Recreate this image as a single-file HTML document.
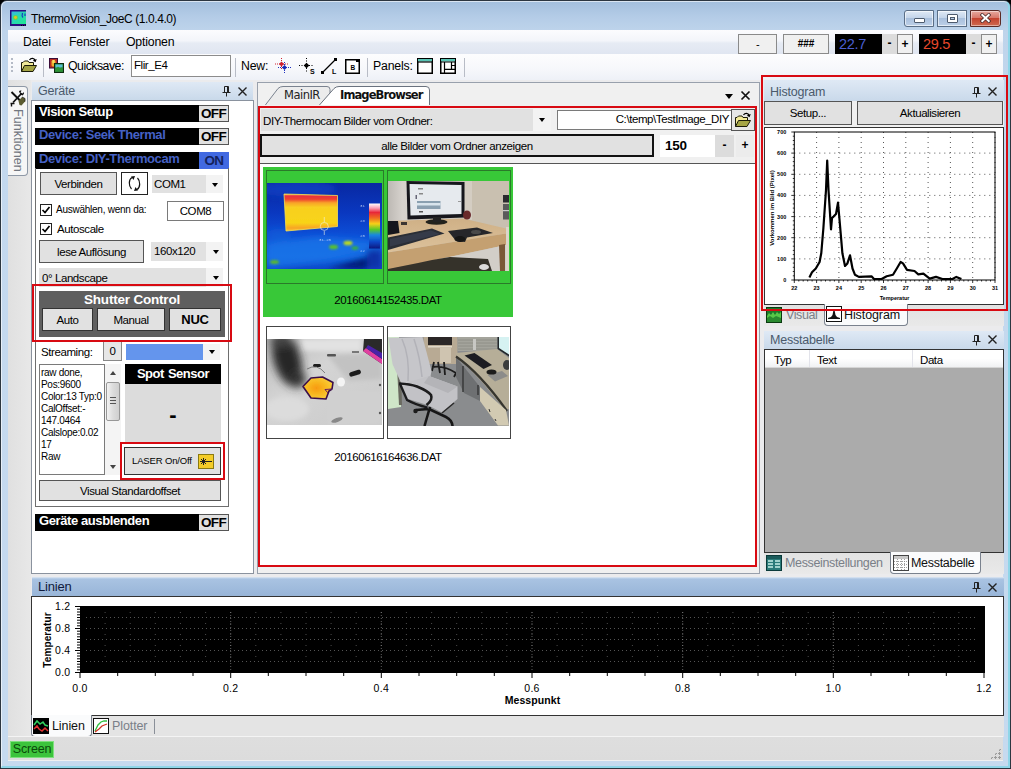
<!DOCTYPE html>
<html><head><meta charset="utf-8"><title>ThermoVision_JoeC</title>
<style>
*{box-sizing:border-box;margin:0;padding:0}
html,body{width:1011px;height:769px;overflow:hidden;background:#000;font-family:"Liberation Sans",sans-serif;font-size:12px;color:#000}
.a{position:absolute}
.seg{font-family:"Liberation Sans","DejaVu Sans",sans-serif}
#win{left:0;top:0;width:1011px;height:769px;background:linear-gradient(180deg,#a3bfdd 0,#b4cce7 16px,#bed4eb 30px,#c3d8ee 120px,#c6daef 100%);border-radius:7px 7px 0 0;border:1px solid #2c3640}
#client{left:8px;top:30px;width:995px;height:731px;background:#f0f0f0}
.btn{position:absolute;background:#e1e1e1;border:1px solid #707070;text-align:center;font-size:11.5px;letter-spacing:-0.42px;white-space:nowrap;overflow:hidden}
.blk{position:absolute;background:#000;color:#fff;font-weight:bold;font-size:13px;letter-spacing:-0.4px;white-space:nowrap;overflow:hidden}
.ptitle{position:absolute;height:18px;padding-top:1px;background:linear-gradient(180deg,#dfe9f5,#c9d9ea);color:#4a5a6c;font-size:12.5px;letter-spacing:-0.2px;padding-left:6px;line-height:17px;white-space:nowrap}
.combo{position:absolute;background:#e1e1e1;font-size:11.5px;letter-spacing:-0.42px;white-space:nowrap;overflow:hidden}
.arr{position:absolute;width:0;height:0;border-left:3px solid transparent;border-right:3px solid transparent;border-top:4px solid #000}
.red{position:absolute;border:2px solid #d80a12;pointer-events:none}
.tx{position:absolute;white-space:nowrap}
</style></head><body>
<div id="win" class="a"></div>
<div class="a" style="left:1px;top:1px;width:1009px;height:767px;border:1px solid rgba(255,255,255,.6);border-right:2px solid #8fd6e8;border-bottom:2px solid #8fd6e8;border-radius:6px 6px 0 0"></div>
<!-- TITLE -->
<svg class="a" style="left:10px;top:10px" width="16" height="16" viewBox="0 0 16 16"><defs><linearGradient id="ic" x1="0" y1="0" x2="1" y2="1"><stop offset="0" stop-color="#38b8e0"/><stop offset="0.5" stop-color="#28d8b0"/><stop offset="1" stop-color="#20e890"/></linearGradient></defs><rect width="16" height="16" fill="#2a0c80"/><rect x="1.500" y="1.500" width="14.500" height="12.500" fill="url(#ic)"/><circle cx="5.500" cy="7.500" r="2.600" fill="#58d858"/><circle cx="5.500" cy="7.500" r="1.400" fill="#f0b820"/><path d="M12.500 3 Q11.500 6 13 7.500 M15 3.500 V6" stroke="#1838c0" stroke-width="1.200" fill="none"/><path d="M11 15.500 H12 M13 15.500 H14 M15 15 H16" stroke="#000" stroke-width="1"/></svg>
<div class="tx seg" style="left:31px;top:11px;font-size:12px;letter-spacing:-0.42px;line-height:16px;">ThermoVision_JoeC (1.0.4.0)</div>
<!-- caption buttons -->
<div class="a" style="left:904px;top:10px;width:30px;height:17px;border:1px solid #5a6e86;border-radius:3px 0 0 3px;background:linear-gradient(180deg,#dfe9f5 0,#c4d5ea 45%,#a9c0dd 50%,#bdd0e8 100%);box-shadow:inset 0 0 0 1px rgba(255,255,255,.6)"></div>
<div class="a" style="left:914px;top:18px;width:11px;height:5px;background:#fff;border:1px solid #4d5b6e;border-radius:1px"></div>
<div class="a" style="left:937px;top:10px;width:30px;height:17px;border:1px solid #5a6e86;background:linear-gradient(180deg,#dfe9f5 0,#c4d5ea 45%,#a9c0dd 50%,#bdd0e8 100%);box-shadow:inset 0 0 0 1px rgba(255,255,255,.6)"></div>
<div class="a" style="left:947px;top:14px;width:11px;height:9px;background:#fff;border:1px solid #4d5b6e;border-radius:1px"></div>
<div class="a" style="left:950px;top:17px;width:5px;height:3px;background:#b9cde6;border:1px solid #4d5b6e"></div>
<div class="a" style="left:970px;top:10px;width:31px;height:17px;border:1px solid #5b2a25;border-radius:0 3px 3px 0;background:linear-gradient(180deg,#e7a99f 0,#d8786a 45%,#c4432f 50%,#cf6a50 100%);box-shadow:inset 0 0 0 1px rgba(255,255,255,.45)"></div>
<svg class="a" style="left:980px;top:13px" width="11" height="10" viewBox="0 0 11 10"><path d="M2.300 2 L8.700 8 M8.700 2 L2.300 8" stroke="#4a2a2a" stroke-width="3.600" stroke-linecap="square"/><path d="M2.300 2 L8.700 8 M8.700 2 L2.300 8" stroke="#fff" stroke-width="2" stroke-linecap="square"/></svg>
<div id="client" class="a"></div>
<!-- MENU -->
<div class="a" id="menubar" style="left:8px;top:30px;width:995px;height:24px;background:linear-gradient(180deg,#fcfcfe 0,#f3f5fa 45%,#e6ebf4 55%,#e0e6f1 100%)"></div>
<div class="tx seg" style="left:23px;top:34px;font-size:12.3px;letter-spacing:-0.2px;line-height:16px;">Datei</div>
<div class="tx seg" style="left:69px;top:34px;font-size:12.3px;letter-spacing:-0.2px;line-height:16px;">Fenster</div>
<div class="tx seg" style="left:126px;top:34px;font-size:12.3px;letter-spacing:-0.2px;line-height:16px;">Optionen</div>
<!-- top right controls -->
<div class="btn" style="left:738px;top:34px;width:39px;height:20px;line-height:18px;background:#f0f0f0;border-color:#8a8a8a;font-size:11px">-</div>
<div class="btn" style="left:783px;top:34px;width:46px;height:20px;line-height:18px;background:#f0f0f0;border-color:#8a8a8a;font-size:10px;font-weight:bold;letter-spacing:0">###</div>
<div class="a" style="left:835px;top:34px;width:47px;height:20px;background:#000;color:#4a5fd0;font-size:14.5px;line-height:21px;padding-left:4px;letter-spacing:-0.3px">22.7</div>
<div class="a" style="left:882px;top:34px;width:15px;height:20px;background:#dcdcdc;font-weight:bold;text-align:center;line-height:19px;font-size:12px">-</div>
<div class="a" style="left:897px;top:34px;width:16px;height:20px;background:#f0f0f0;border:1px solid #8a8a8a;font-weight:bold;text-align:center;line-height:19px;font-size:12px">+</div>
<div class="a" style="left:919px;top:34px;width:47px;height:20px;background:#000;color:#e8482c;font-size:14.5px;line-height:21px;padding-left:4px;letter-spacing:-0.3px">29.5</div>
<div class="a" style="left:966px;top:34px;width:15px;height:20px;background:#dcdcdc;font-weight:bold;text-align:center;line-height:19px;font-size:12px">-</div>
<div class="a" style="left:981px;top:34px;width:16px;height:20px;background:#f0f0f0;border:1px solid #8a8a8a;font-weight:bold;text-align:center;line-height:19px;font-size:12px">+</div>
<!-- TOOLBAR -->
<div class="a" id="toolbar" style="left:8px;top:54px;width:995px;height:26px;background:linear-gradient(180deg,#fdfdfe 0,#f6f7fb 60%,#eef1f7 100%)"></div>
<div class="a" style="left:11px;top:58px;width:2px;height:15px;background:repeating-linear-gradient(180deg,#b4bac6 0,#b4bac6 2px,transparent 2px,transparent 4px)"></div>
<svg class="a" style="left:20px;top:57px" width="18" height="17" viewBox="0 0 18 17"><path d="M1.500 14.500 V5.500 H3 L4.500 4 H8 L9 5.500 H13.500 V8" fill="#f2ea98" stroke="#1a1a08" stroke-width="1"/><path d="M1.500 14.500 L4.500 8.500 H16.500 L13 14.500 Z" fill="#a4a444" stroke="#1a1a08" stroke-width="1"/><path d="M9.500 3 C11 0.800 14 0.800 15.300 3.500" fill="none" stroke="#000" stroke-width="1.300"/><path d="M16.800 2 L15.500 5.200 L12.800 3.600 Z" fill="#000"/></svg>
<div class="a" style="left:43px;top:58px;width:1px;height:19px;background:#b8bcc6"></div>
<svg class="a" style="left:49px;top:58px" width="15" height="15" viewBox="0 0 15 15"><rect x="0.500" y="0.500" width="8" height="9.500" fill="#b82c20" stroke="#3a0c38"/><rect x="2.500" y="2" width="4" height="6.500" rx="1.500" fill="#f0b030"/><rect x="3.500" y="2" width="2" height="3" fill="#f8e060"/><rect x="5.500" y="5.500" width="9" height="9" fill="#2a8038" stroke="#0c2c10"/><rect x="6.500" y="6.500" width="7" height="3" fill="#58c0d8"/><path d="M6.500 11 L9 8.500 L11 10.500 L13.500 9 V13.500 H6.500Z" fill="#2c9434"/></svg>
<div class="tx seg" style="left:68px;top:58px;font-size:12.3px;letter-spacing:-0.5px;line-height:16px;">Quicksave:</div>
<div class="a" style="left:131px;top:55px;width:100px;height:22px;background:#fff;border:1px solid #8c8c8c;font-size:11.5px;letter-spacing:-0.42px;padding:2px 0 0 2px;line-height:14px" class="seg">Flir_E4</div>
<div class="a" style="left:235px;top:58px;width:1px;height:19px;background:#b8bcc6"></div>
<div class="tx seg" style="left:241px;top:58px;font-size:12.3px;letter-spacing:-0.2px;line-height:16px;">New:</div>
<svg class="a" style="left:274px;top:57px" width="18" height="18" viewBox="0 0 18 18"><path d="M7.500 1 V13 M1 7 H14" stroke="#d02030" stroke-width="1" stroke-dasharray="1 1"/><path d="M10.500 5 V17 M4 10.500 H17" stroke="#2030c0" stroke-width="1" stroke-dasharray="1 1"/><path d="M7.500 4.500 L10 7 L7.500 9.500 L5 7 Z" fill="#d02030"/><path d="M10.500 8 L13 10.500 L10.500 13 L8 10.500 Z" fill="#1828b8"/></svg>
<svg class="a" style="left:298px;top:57px" width="18" height="18" viewBox="0 0 18 18"><path d="M8.500 1 V16 M1 8.500 H15" stroke="#000" stroke-width="1" stroke-dasharray="1 1.500"/><rect x="6.500" y="6.500" width="4" height="4" fill="#000" transform="rotate(45 8.500 8.500)"/><text x="12" y="17" font-size="7" font-weight="bold" font-family="Liberation Sans,sans-serif">S</text></svg>
<svg class="a" style="left:320px;top:57px" width="18" height="18" viewBox="0 0 18 18"><path d="M2.500 15.500 L15.500 2.500" stroke="#000" stroke-width="1.200"/><rect x="1" y="14" width="3" height="3" fill="#000"/><rect x="14" y="1" width="3" height="3" fill="#000"/><text x="12" y="17" font-size="7" font-weight="bold" font-family="Liberation Sans,sans-serif">L</text></svg>
<svg class="a" style="left:345px;top:59px" width="15" height="15" viewBox="0 0 15 15"><rect x="0.750" y="0.750" width="13.500" height="13.500" fill="#fff" stroke="#000" stroke-width="1.500"/><rect x="11" y="0" width="4" height="3" fill="#000"/><text x="5.500" y="11" font-size="6.500" font-weight="bold" font-family="Liberation Sans,sans-serif">B</text></svg>
<div class="a" style="left:367px;top:58px;width:1px;height:19px;background:#b8bcc6"></div>
<div class="tx seg" style="left:373px;top:58px;font-size:12.3px;letter-spacing:-0.2px;line-height:16px;">Panels:</div>
<svg class="a" style="left:417px;top:58px" width="16" height="16" viewBox="0 0 16 16"><rect x="0.750" y="0.750" width="14.500" height="14.500" fill="#fff" stroke="#000" stroke-width="1.500"/><rect x="1" y="1" width="14" height="2.500" fill="#58c4b4"/><path d="M0 4 H16" stroke="#000" stroke-width="1.200"/></svg>
<svg class="a" style="left:440px;top:58px" width="16" height="16" viewBox="0 0 16 16"><rect x="0.750" y="0.750" width="14.500" height="14.500" fill="#fff" stroke="#000" stroke-width="1.500"/><rect x="1" y="1" width="14" height="2.500" fill="#58c4b4"/><path d="M0 4 H16 M4.500 4 V15 M11.500 4 V11.300 M4.500 11.300 H15 M11.500 7.500 H15" stroke="#000" stroke-width="1.200" fill="none"/></svg>
<div class="a" style="left:464px;top:58px;width:1px;height:19px;background:#b8bcc6"></div>
<!-- PANELS go below -->
<div id="L" class="a" style="left:0;top:0">
<!-- dock bg -->
<div class="a" style="left:8px;top:80px;width:995px;height:658px;background:#ebebed"></div>
<div class="a" style="left:8px;top:80px;width:23px;height:658px;background:linear-gradient(90deg,#e0e0e0,#e8e8e8)"></div>
<!-- autohide tab -->
<div class="a" style="left:8px;top:86px;width:20px;height:90px;background:#f6f6f6;border:1px solid #8e98a6;border-left:none;border-radius:0 4px 4px 0"></div>
<svg class="a" style="left:10px;top:90px" width="16" height="17" viewBox="0 0 16 17"><path d="M1.500 2 L11 11.500" stroke="#111" stroke-width="2"/><path d="M11.500 3.500 L3 12.500" stroke="#111" stroke-width="1.800"/><path d="M9 1.500 Q9.500 0 11.500 0.500 L10.500 2.500 L12.500 3.500 L14 2 Q14.500 4.500 12.500 5.500 L10.500 4.500Z" fill="#111"/><path d="M8.500 11 L12 7 L15 8.500 L15 11.500 L11.500 15.500 L9.500 15Z" fill="#5c5c30"/><path d="M12 7 L15 8.500 L15 11.500" fill="none" stroke="#222" stroke-width="0.800"/><path d="M0.500 13.500 H4.500 M1.500 13.500 V16.500" stroke="#111" stroke-width="1.400"/></svg>
<div class="tx seg" style="left:10px;top:109px;width:16px;height:68px;writing-mode:vertical-rl;font-size:12.5px;line-height:16px;color:#72777f;letter-spacing:0.1px">Funktionen</div>
<!-- Geraete panel -->
<div class="ptitle seg" style="left:32px;top:82px;width:221px">Geräte</div>
<svg class="a" style="left:221px;top:85px" width="10" height="12" viewBox="0 0 10 12"><path d="M3.500 1.500 H7.500 V7.500 H3.500 Z M1.500 7.500 H9.500 M5.500 8 V11.500" stroke="#222" stroke-width="1" fill="none"/><path d="M6.500 2 V7" stroke="#222" stroke-width="1"/></svg>
<svg class="a" style="left:237px;top:86px" width="11" height="11" viewBox="0 0 11 11"><path d="M1.500 1.500 L9.500 9.500 M9.500 1.500 L1.500 9.500" stroke="#222" stroke-width="1.400"/></svg>
<div class="a" style="left:31px;top:100px;width:223px;height:474px;background:#fff;border:1px solid #8a929e"></div>
<!-- bars -->
<div class="blk" style="left:35px;top:105px;width:194px;height:17px;line-height:14px;padding-left:4px">Vision Setup</div>
<div class="a" style="left:199px;top:105px;width:30px;height:17px;background:#e1e1e1;border:1px solid #555;border-left:none;font-weight:bold;font-size:13.5px;letter-spacing:-0.6px;text-align:center;line-height:16px">OFF</div>
<div class="blk" style="left:35px;top:128px;width:194px;height:17px;line-height:14px;padding-left:4px;color:#4561c6">Device: Seek Thermal</div>
<div class="a" style="left:199px;top:128px;width:30px;height:17px;background:#e1e1e1;border:1px solid #555;border-left:none;font-weight:bold;font-size:13.5px;letter-spacing:-0.6px;text-align:center;line-height:16px">OFF</div>
<div class="blk" style="left:35px;top:152px;width:194px;height:17px;line-height:14px;padding-left:4px;color:#4561c6">Device: DIY-Thermocam</div>
<div class="a" style="left:199px;top:152px;width:30px;height:17px;background:#4169e1;color:#14225c;font-weight:bold;font-size:13.5px;letter-spacing:-0.6px;text-align:center;line-height:17px">ON</div>
<div class="a" style="left:35px;top:168px;width:194px;height:339px;border:1px solid #6e6e6e;border-top:none"></div>
<!-- row 1 -->
<div class="btn" style="left:40px;top:172px;width:77px;height:23px;line-height:22.5px;border-color:#555">Verbinden</div>
<div class="a" style="left:121px;top:172px;width:27px;height:23px;background:#fff;border:1px solid #222"></div>
<svg class="a" style="left:126px;top:175px" width="17" height="17" viewBox="0 0 17 17"><path d="M6 2.500 C2.500 4.500 2.500 11 5.500 14" fill="none" stroke="#111" stroke-width="1.200"/><path d="M11 14.500 C14.500 12.500 14.500 6 11.500 3" fill="none" stroke="#111" stroke-width="1.200"/><path d="M9 1 L5 1.500 L7.500 5Z" fill="#111"/><path d="M8 16 L12 15.500 L9.500 12Z" fill="#111"/></svg>
<div class="combo" style="left:152px;top:175px;width:54px;height:18px;line-height:18px;padding-left:2px">COM1</div>
<div class="a" style="left:206px;top:175px;width:17px;height:18px;background:#f3f3f3"></div><div class="arr" style="left:212px;top:183px"></div>
<!-- row 2 -->
<div class="a" style="left:40px;top:204px;width:12px;height:12px;background:#fff;border:1px solid #222"></div>
<svg class="a" style="left:41px;top:205px" width="10" height="10" viewBox="0 0 10 10"><path d="M1.500 5 L4 7.500 L8.500 2" fill="none" stroke="#000" stroke-width="1.700"/></svg>
<div class="tx" style="left:56px;top:203px;font-size:10px;letter-spacing:-0.25px;line-height:14px">Auswählen, wenn da:</div>
<div class="a" style="left:167px;top:201px;width:57px;height:20px;background:#fff;border:1px solid #7a7a7a;text-align:center;line-height:18px;font-size:11.5px;letter-spacing:-0.42px">COM8</div>
<div class="a" style="left:40px;top:223px;width:12px;height:12px;background:#fff;border:1px solid #222"></div>
<svg class="a" style="left:41px;top:224px" width="10" height="10" viewBox="0 0 10 10"><path d="M1.500 5 L4 7.500 L8.500 2" fill="none" stroke="#000" stroke-width="1.700"/></svg>
<div class="tx" style="left:57px;top:222px;font-size:11.5px;letter-spacing:-0.42px;line-height:14px">Autoscale</div>
<!-- row 3 -->
<div class="btn" style="left:39px;top:240px;width:105px;height:23px;line-height:22.5px;border-color:#555">lese Auflösung</div>
<div class="combo" style="left:151px;top:242px;width:55px;height:19px;line-height:19px;padding-left:3px">160x120</div>
<div class="a" style="left:206px;top:242px;width:17px;height:19px;background:#f3f3f3"></div><div class="arr" style="left:213px;top:250px"></div>
<div class="combo" style="left:39px;top:268px;width:167px;height:19px;line-height:20px;padding-left:3px">0° Landscape</div>
<div class="a" style="left:206px;top:268px;width:17px;height:19px;background:#f3f3f3"></div><div class="arr" style="left:213px;top:276px"></div>
<!-- shutter -->
<div class="a" style="left:39px;top:291px;width:186px;height:46px;background:#5f5f5f"></div>
<div class="tx" style="left:39px;top:292px;width:186px;text-align:center;color:#fff;font-weight:bold;font-size:13.500px;letter-spacing:-0.2px;line-height:16px">Shutter Control</div>
<div class="btn" style="left:42px;top:308px;width:51px;height:23px;line-height:22.5px;border-color:#333">Auto</div>
<div class="btn" style="left:97px;top:308px;width:68px;height:23px;line-height:22.5px;border-color:#333">Manual</div>
<div class="btn" style="left:169px;top:308px;width:52px;height:23px;line-height:22.5px;border-color:#333;font-weight:bold;font-size:13px;letter-spacing:-0.2px">NUC</div>
<!-- streaming -->
<div class="tx" style="left:41px;top:345px;font-size:11.5px;letter-spacing:-0.42px;line-height:14px">Streaming:</div>
<div class="btn" style="left:103px;top:341px;width:19px;height:20px;line-height:18px;border-color:#888;background:#e6e6e6">0</div>
<div class="a" style="left:126px;top:344px;width:77px;height:16px;background:#6495ed"></div>
<div class="a" style="left:203px;top:344px;width:17px;height:16px;background:#f3f3f3"></div><div class="arr" style="left:209px;top:350px"></div>
<!-- textbox -->
<div class="a" style="left:39px;top:364px;width:66px;height:111px;background:#fff;border:1px solid #7a7a7a;font-size:10px;line-height:12px;letter-spacing:-0.3px;padding:2px 0 0 1px;white-space:nowrap;overflow:hidden">raw done,<br>Pos:9600<br>Color:13 Typ:0<br>CalOffset:-<br>147.0464<br>Calslope:0.02<br>17<br>Raw</div>
<div class="a" style="left:105px;top:364px;width:16px;height:111px;background:#f4f4f4"></div>
<div class="a" style="left:106px;top:382px;width:14px;height:39px;background:linear-gradient(90deg,#f2f2f2,#dcdcdc 50%,#cfcfcf);border:1px solid #979797;border-radius:2px"></div>
<div class="a" style="left:110px;top:397px;width:6px;height:7px;background:repeating-linear-gradient(180deg,#555 0,#555 1px,transparent 1px,transparent 3px)"></div>
<div class="arr" style="left:110px;top:371px;border-top:none;border-bottom:4px solid #444"></div>
<div class="arr" style="left:110px;top:465px;border-top-color:#444"></div>
<!-- spot sensor -->
<div class="a" style="left:125px;top:364px;width:96px;height:78px;background:#dcdcdc"></div>
<div class="blk" style="left:125px;top:364px;width:96px;height:20px;text-align:center;line-height:20px;font-size:13px;letter-spacing:-0.5px;word-spacing:1px">Spot Sensor</div>
<div class="tx" style="left:125px;top:407px;width:96px;text-align:center;font-weight:bold;font-size:22px;line-height:16px">-</div>
<div class="btn" style="left:124px;top:447px;width:97px;height:28px;border-color:#333"></div>
<div class="tx" style="left:132px;top:455px;font-size:9.500px;letter-spacing:-0.15px;line-height:12px">LASER On/Off</div>
<div class="a" style="left:198px;top:454px;width:16px;height:15px;background:#f4cc28;border:1px solid #8a7a10"></div>
<svg class="a" style="left:199px;top:455px" width="14" height="13" viewBox="0 0 14 13"><path d="M1 6.500 H13 M4.500 3 V10 M2 4 L7 9 M7 4 L2 9" stroke="#222" stroke-width="1"/></svg>
<div class="btn" style="left:39px;top:480px;width:182px;height:21px;line-height:20px;border-color:#555">Visual Standardoffset</div>
<!-- bottom bar -->
<div class="blk" style="left:35px;top:514px;width:194px;height:17px;line-height:14px;padding-left:4px">Geräte ausblenden</div>
<div class="a" style="left:199px;top:514px;width:30px;height:17px;background:#e1e1e1;border:1px solid #555;border-left:none;font-weight:bold;font-size:13.5px;letter-spacing:-0.6px;text-align:center;line-height:16px">OFF</div>
<!-- red annotations -->
<div class="red" style="left:32px;top:284px;width:200px;height:58px"></div>
<div class="red" style="left:120px;top:442px;width:105px;height:38px"></div>
</div>
<div id="C" class="a" style="left:0;top:0">
<div class="a" style="left:257px;top:82px;width:503px;height:492px;background:#f0f0f0;border:1px solid #98a0ac"></div>
<!-- tabs -->
<svg class="a" style="left:257px;top:83px" width="200" height="23" viewBox="0 0 200 23"><path d="M8 22.500 L21 5.500 Q23 3.500 26 3.500 H70 Q73 3.500 73 6.500 V22.500" fill="#ececec" stroke="#7a828e" stroke-width="1"/><path d="M62 22.500 L77 5.500 Q79 3.500 82 3.500 H169 Q172.500 3.500 172.500 7 V22.500 Z" fill="#fff" stroke="none"/><path d="M62 22.500 L77 5.500 Q79 3.500 82 3.500 H169 Q172.500 3.500 172.500 7 V22.500" fill="none" stroke="#6a727e" stroke-width="1"/></svg>
<div class="tx" style="left:284px;top:87px;font-family:'Liberation Serif','DejaVu Serif',serif;font-size:13px;line-height:16px;color:#222;font-family:'DejaVu Sans','Liberation Sans',sans-serif;font-size:11.500px;letter-spacing:-0.5px">MainIR</div>
<div class="tx" style="left:340px;top:87px;font-family:'DejaVu Sans','Liberation Sans',sans-serif;font-weight:bold;font-size:11.500px;letter-spacing:-0.9px;line-height:16px;color:#111">ImageBrowser</div>
<div class="arr" style="left:725px;top:94px;border-left-width:4px;border-right-width:4px;border-top-width:5px"></div>
<svg class="a" style="left:740px;top:90px" width="11" height="11" viewBox="0 0 11 11"><path d="M1.500 1.500 L9.500 9.500 M9.500 1.500 L1.500 9.500" stroke="#111" stroke-width="1.700"/></svg>
<!-- content -->
<div class="a" style="left:258px;top:105px;width:499px;height:465px;background:#f0f0f0"></div>
<div class="combo" style="left:261px;top:109px;width:272px;height:22px;line-height:25px;padding-left:2px">DIY-Thermocam Bilder vom Ordner:</div>
<div class="a" style="left:533px;top:109px;width:18px;height:22px;background:#f3f3f3"></div><div class="arr" style="left:539px;top:118px"></div>
<div class="a" style="left:557px;top:110px;width:175px;height:20px;background:#fff;border:1px solid #7a7a7a;text-align:right;line-height:17px;font-size:11.5px;letter-spacing:-0.42px;padding-right:2px;white-space:nowrap">C:\temp\TestImage_DIY</div>
<div class="a" style="left:731px;top:109px;width:24px;height:22px;background:#e6e6e6;border:1px solid #555"></div>
<svg class="a" style="left:734px;top:112px" width="18" height="17" viewBox="0 0 18 17"><path d="M1.500 14.500 V5.500 H3 L4.500 4 H8 L9 5.500 H13.500 V8" fill="#f2ea98" stroke="#1a1a08" stroke-width="1"/><path d="M1.500 14.500 L4.500 8.500 H16.500 L13 14.500 Z" fill="#a4a444" stroke="#1a1a08" stroke-width="1"/><path d="M9.500 3 C11 0.800 14 0.800 15.300 3.500" fill="none" stroke="#000" stroke-width="1.300"/><path d="M16.800 2 L15.500 5.200 L12.800 3.600 Z" fill="#000"/></svg>
<div class="btn" style="left:260px;top:134px;width:394px;height:23px;line-height:20.5px;border:2px solid #111">alle Bilder vom Ordner anzeigen</div>
<div class="a" style="left:660px;top:135px;width:55px;height:22px;background:#fff;font-weight:bold;font-size:13.500px;letter-spacing:-0.2px;line-height:22px;padding-left:5px">150</div>
<div class="a" style="left:715px;top:135px;width:19px;height:22px;background:#dcdcdc;font-weight:bold;text-align:center;line-height:21px;font-size:12px">-</div>
<div class="a" style="left:736px;top:135px;width:18px;height:22px;background:#ececec;font-weight:bold;text-align:center;line-height:21px;font-size:12px">+</div>
<!-- list -->
<div class="a" style="left:260px;top:163px;width:495px;height:404px;background:#fff;border-top:1px solid #555"></div>
<div class="a" style="left:263px;top:167px;width:250px;height:150px;background:#38c838"></div>
<div class="a" style="left:266px;top:170px;width:118px;height:114px;border:1px solid #2a7a2a"></div>
<div class="a" style="left:387px;top:170px;width:124px;height:114px;border:1px solid #2a7a2a"></div>
<div class="tx" style="left:263px;top:293px;width:250px;text-align:center;font-size:11.5px;letter-spacing:-0.42px;line-height:14px">20160614152435.DAT</div>
<div class="a" style="left:266px;top:326px;width:118px;height:113px;background:#fff;border:1px solid #444"></div>
<div class="a" style="left:387px;top:326px;width:124px;height:113px;background:#fff;border:1px solid #444"></div>
<div class="tx" style="left:263px;top:450px;width:250px;text-align:center;font-size:11.5px;letter-spacing:-0.42px;line-height:14px">20160616164636.DAT</div>
<!--IMG1--><svg class="a" style="left:267px;top:183px" width="115" height="86" viewBox="0 0 115 86"><defs><filter id="b1" x="-10%" y="-10%" width="120%" height="120%"><feGaussianBlur stdDeviation="0.7"/></filter><filter id="b1c" x="-50%" y="-50%" width="200%" height="200%"><feGaussianBlur stdDeviation="1.3"/></filter><filter id="b1b" x="-30%" y="-30%" width="160%" height="160%"><feGaussianBlur stdDeviation="3"/></filter><linearGradient id="g1bg" x1="0" y1="0" x2="0" y2="1"><stop offset="0" stop-color="#0828a2"/><stop offset="0.35" stop-color="#0a38c0"/><stop offset="0.6" stop-color="#0c4ed6"/><stop offset="0.85" stop-color="#1164e0"/><stop offset="1" stop-color="#0c46c8"/></linearGradient><linearGradient id="g1hot" x1="0" y1="0" x2="0" y2="1"><stop offset="0" stop-color="#f8d850"/><stop offset="0.05" stop-color="#e83040"/><stop offset="0.14" stop-color="#ee4030"/><stop offset="0.24" stop-color="#f8a428"/><stop offset="0.36" stop-color="#f8d020"/><stop offset="0.78" stop-color="#f8d418"/><stop offset="0.92" stop-color="#f8a424"/><stop offset="1" stop-color="#f8c838"/></linearGradient><linearGradient id="g1sc" x1="0" y1="0" x2="0" y2="1"><stop offset="0" stop-color="#ffffff"/><stop offset="0.1" stop-color="#f8a0b8"/><stop offset="0.2" stop-color="#e82838"/><stop offset="0.33" stop-color="#f07020"/><stop offset="0.45" stop-color="#f8d018"/><stop offset="0.58" stop-color="#58c828"/><stop offset="0.7" stop-color="#1888e0"/><stop offset="0.85" stop-color="#0c48c8"/><stop offset="1" stop-color="#081880"/></linearGradient></defs><rect width="115" height="86" fill="url(#g1bg)"/><g filter="url(#b1b)"><ellipse cx="30" cy="6" rx="40" ry="8" fill="#0c44c8" opacity="0.7"/><polygon points="0,60 50,54 100,58 115,66 60,78 0,86" fill="#1a74e8" opacity="0.8"/><polygon points="60,86 115,70 115,86" fill="#061470"/><ellipse cx="12" cy="52" rx="12" ry="6" fill="#1460d8" opacity="0.6"/><rect x="100" y="66" width="15" height="20" fill="#0830a8"/></g><g filter="url(#b1)"><polygon points="17,11 70.500,12.500 70.500,43.500 19,48" fill="url(#g1hot)" stroke="#f8e050" stroke-width="0.8"/></g><g filter="url(#b1c)"><ellipse cx="66.500" cy="64" rx="4.500" ry="2.300" fill="#58c030"/><ellipse cx="81" cy="60" rx="4.500" ry="2.300" fill="#b8d820"/><ellipse cx="88" cy="65" rx="3.500" ry="1.800" fill="#38b040"/><ellipse cx="7.500" cy="79" rx="4.500" ry="2" fill="#58b830"/></g><g filter="url(#b1)"><rect x="102" y="20.500" width="11" height="45" fill="url(#g1sc)"/><circle cx="57.300" cy="43.400" r="4" fill="none" stroke="#f0f0e0" stroke-width="0.600"/><path d="M57.300 34 V39 M57.300 48 V52" stroke="#f0f0e0" stroke-width="0.600"/></g><g font-family="Liberation Mono,monospace" font-size="4" fill="#c8d8f8" opacity="0.85"><text x="93" y="23.500">31</text><text x="93" y="38.500">28</text><text x="93" y="53.500">25</text><text x="93" y="68.500">22</text><text x="52" y="57.500">31.25</text></g></svg><!--/IMG1--><!--IMG2--><svg class="a" style="left:388px;top:181px" width="121" height="90" viewBox="0 0 121 90"><defs><filter id="b2" x="-10%" y="-10%" width="120%" height="120%"><feGaussianBlur stdDeviation="0.6"/></filter><filter id="b2b" x="-30%" y="-30%" width="160%" height="160%"><feGaussianBlur stdDeviation="2.500"/></filter><linearGradient id="g2w" x1="0" y1="0" x2="1" y2="0"><stop offset="0" stop-color="#bdb9b4"/><stop offset="0.12" stop-color="#d6d2cd"/><stop offset="0.6" stop-color="#cfc8be"/><stop offset="0.8" stop-color="#c2b8a8"/><stop offset="1" stop-color="#d8d4d0"/></linearGradient><linearGradient id="g2d" x1="0" y1="0" x2="0" y2="1"><stop offset="0" stop-color="#cfb086"/><stop offset="1" stop-color="#dcc29c"/></linearGradient></defs><rect width="121" height="90" fill="url(#g2w)"/><g filter="url(#b2)"><polygon points="77,0 121,0 121,49 76,37.500" fill="#c9c0b0"/><polygon points="77,0 84,0 84,39 76,37.500" fill="#d4cdc2"/><polygon points="0,40 75,37.500 118,47.500 118,52.500 0,71.500" fill="url(#g2d)"/><polygon points="0,71.500 118,52.500 118,64 0,89" fill="#c4a071"/><polygon points="0,89 118,64 121,64 121,90 0,90" fill="#d2cec8"/><polygon points="0,90 0,88 30,82 44,79 62,76 100,78 104,90" fill="#35302a"/><ellipse cx="96" cy="86" rx="5" ry="3" fill="#dcdcdc"/><polygon points="111,64 117,63 117,90 112,90" fill="#7a5838"/><rect x="118" y="46" width="3" height="44" fill="#dcd6ca"/><polygon points="18.500,0 76.500,1 76.500,36.500 19.500,38.500" fill="#15181c"/><polygon points="21.500,3 73.500,4 73.500,33 22.500,34.500" fill="#e6eaee"/><rect x="29" y="20" width="23.500" height="8" fill="#8aa0b0"/><rect x="29" y="22" width="23.500" height="2.500" fill="#d8e4ec"/><rect x="30" y="7" width="5" height="1.500" fill="#888"/><rect x="31" y="12" width="4" height="1.500" fill="#888"/><rect x="27.500" y="14" width="1.500" height="4" fill="#667"/><rect x="31" y="30" width="4" height="1.500" fill="#555"/><rect x="70" y="20" width="3" height="1" fill="#999"/><ellipse cx="48.500" cy="41" rx="11" ry="2.800" fill="#24221e"/><rect x="45" y="36" width="8" height="5" fill="#222"/><ellipse cx="79" cy="34" rx="4" ry="4.500" fill="#6a2a2c"/><polygon points="0,40 10,40 11.500,52 0,54" fill="#16181c"/><rect x="13" y="41" width="6" height="3" fill="#3a3632"/><polygon points="0,56.500 44,47.500 56.500,52.500 0,69" fill="#2a2e36"/><polygon points="2,58 43,49.500 52,53 2,65.500" fill="#3a4250" opacity="0.7"/><polygon points="60,50 89,46.500 105,52 79,56.500 77,61 68,60" fill="#26282a"/><ellipse cx="72" cy="58" rx="5.500" ry="3" fill="#141414"/><ellipse cx="88" cy="51" rx="5" ry="2" fill="#4a4a4a"/><rect x="115" y="14" width="6" height="7.500" fill="#2a2a2e"/><rect x="115" y="23" width="6" height="15.500" fill="#5a5a5a"/><rect x="115" y="29" width="6" height="1.200" fill="#c8c8c8"/></g></svg><!--/IMG2--><!--IMG3--><svg class="a" style="left:267px;top:339px" width="115" height="86" viewBox="0 0 115 86"><defs><filter id="b3" x="-10%" y="-10%" width="120%" height="120%"><feGaussianBlur stdDeviation="0.7"/></filter><filter id="b3b" x="-40%" y="-40%" width="180%" height="180%"><feGaussianBlur stdDeviation="4"/></filter><filter id="b3c" x="-40%" y="-40%" width="180%" height="180%"><feGaussianBlur stdDeviation="2"/></filter><linearGradient id="g3bg" x1="0" y1="0" x2="1" y2="1"><stop offset="0" stop-color="#bcbcbc"/><stop offset="0.4" stop-color="#d4d4d4"/><stop offset="1" stop-color="#cacaca"/></linearGradient><radialGradient id="g3hot" cx="0.45" cy="0.5" r="0.6"><stop offset="0" stop-color="#f89a10"/><stop offset="0.5" stop-color="#f8b820"/><stop offset="1" stop-color="#f8d040"/></radialGradient></defs><rect width="115" height="86" fill="url(#g3bg)"/><g filter="url(#b3c)"><rect x="34" y="0" width="60" height="12" fill="#e2e2e2"/><polygon points="60,16 115,14 115,40 82,42" fill="#c2c2c2"/><rect x="60" y="52" width="55" height="34" fill="#d0d0d0"/><ellipse cx="20" cy="70" rx="22" ry="12" fill="#dcdcdc"/></g><g filter="url(#b3b)"><ellipse cx="20" cy="20" rx="13.500" ry="28" fill="#262626" transform="rotate(-16 20 20)"/><ellipse cx="30" cy="40" rx="9" ry="9" fill="#333"/><ellipse cx="14" cy="2" rx="12" ry="6" fill="#444"/></g><g filter="url(#b3)"><polygon points="97,0 115,0 115,25 96,12" fill="#2a2a2a"/><polygon points="96,12 115,25 115,20 99,9" fill="#e040a0"/><polygon points="99,9 115,20 115,14 101,6" fill="#4a22a8"/><rect x="60" y="15" width="9" height="2.500" rx="1" fill="#555"/><rect x="46" y="25" width="8" height="3" rx="1.500" fill="#1a1a1a"/><path d="M40 30 Q50 24 58 34" stroke="#666" stroke-width="0.800" fill="none"/><rect x="82" y="32" width="12" height="4.500" rx="2" fill="#1c1c1c" transform="rotate(-18 88 34)"/><rect x="85" y="12" width="7" height="2" fill="#777"/><ellipse cx="74" cy="43" rx="4" ry="4.500" fill="#f4f4f4"/><polygon points="36,47.500 44,39 55.500,38 66,43.500 65,50 62,52 59,60 44,59" fill="url(#g3hot)" stroke="#3a1048" stroke-width="1.600" stroke-linejoin="round"/><path d="M65 50 L58 50.500 L61 54" stroke="#6a2060" stroke-width="1" fill="none"/><ellipse cx="70" cy="81" rx="6" ry="2" fill="#888" transform="rotate(-20 70 81)"/><circle cx="113" cy="46" r="1.200" fill="#555"/><circle cx="113" cy="74" r="1.200" fill="#555"/></g></svg><!--/IMG3--><!--IMG4--><svg class="a" style="left:388px;top:337px" width="121" height="89" viewBox="0 0 121 89"><defs><filter id="b4" x="-10%" y="-10%" width="120%" height="120%"><feGaussianBlur stdDeviation="0.6"/></filter></defs><rect width="121" height="89" fill="#8a8c8e"/><g filter="url(#b4)"><polygon points="0,0 11,0 13,70 0,72" fill="#cfe6c8"/><polygon points="9,30 13,30 14,68 11,68" fill="#6a6a60"/><rect x="35.500" y="0" width="34" height="27" fill="#b8aa94"/><rect x="40" y="0" width="24" height="8" fill="#2a2826"/><rect x="40" y="9" width="24" height="1.500" fill="#e0d8c8"/><rect x="52" y="11" width="11" height="15" fill="#cfc4b0"/><rect x="69.500" y="0" width="40" height="14" fill="#a4a49c"/><path d="M70 3 H109 M70 6 H109 M70 9 H109 M70 12 H109" stroke="#8a8a84" stroke-width="0.800"/><rect x="85" y="2" width="3" height="11" fill="#c8c8c4"/><path d="M46 25 L44 34 M56 25 L57 38 M50 25 L52 36 M44 30 Q56 28 68 36 L66 40" stroke="#1c1c1c" stroke-width="1.800" fill="none"/><polygon points="68,20 92,50 92,64 76,56 68,40" fill="#6e7072"/><polygon points="68,16 109,12 121,21 121,72 117,73 95,46 80,30 68,20" fill="#b6ae98"/><path d="M68,19.500 Q92,36 119,74" stroke="#36342e" stroke-width="2.200" fill="none"/><polygon points="92,50 118,73 121,88.500 110,88.500 92,64" fill="#d2cab2"/><path d="M101 72 l1 3 M107 82 l1 2" stroke="#333" stroke-width="1"/><path d="M75 29 V55 M90 48 V58" stroke="#2a2a2a" stroke-width="1.200"/><polygon points="76.500,18.500 86.500,16 104,28 95.500,32" fill="#1c1e20"/><polygon points="99.500,38 114,34 120,39 107,44.500" fill="#8c8c8a"/><ellipse cx="103.500" cy="35" rx="5" ry="2.600" fill="#1a1a1a"/><polygon points="109.500,0 121,0 121,19.500 109.500,12" fill="#22262a"/><polygon points="111,0 121,0 121,17.500 111,11" fill="#d6f2f2"/><ellipse cx="119" cy="28" rx="4" ry="5" fill="#3a3c3e"/><polygon points="0.500,1 34.500,0 43.500,34 41,47 13.500,47 4.500,27" fill="#c6c6ca"/><path d="M14 2 Q22 20 20 44 M26 2 Q32 20 34 40" stroke="#b2b2b8" stroke-width="1.500" fill="none"/><polygon points="13.500,47 41,39 69.500,49.500 69.500,62 54,75.500 39.500,68 20,62" fill="#c2c2c6"/><polygon points="41,39 69.500,49.500 60,56 36,46" fill="#b4b4b8"/><path d="M11,46.500 Q22,47 29,49.500 Q40,54 43,58 Q45,63 38.500,68" stroke="#1a1a1c" stroke-width="2.600" fill="none"/><path d="M12,47 L19,63 Q28,68 39.500,70.500" stroke="#1a1a1c" stroke-width="2.200" fill="none"/><path d="M42,70 L36.500,89 M41,72 L58,80 Q64,83 64.500,89 M40,72 L28,73" stroke="#161618" stroke-width="2.600" fill="none"/><circle cx="27.500" cy="74" r="2.200" fill="#1a1a1a"/><path d="M54 76 L66 66" stroke="#2a2a2a" stroke-width="1.500"/></g></svg><!--/IMG4-->
<div class="red" style="left:258px;top:106px;width:499px;height:461px;border-width:2px"></div>
</div>
<div id="R" class="a" style="left:0;top:0">
<div class="ptitle seg" style="left:764px;top:80px;width:240px;height:21px;padding-top:4px">Histogram</div>
<svg class="a" style="left:971px;top:86px" width="10" height="12" viewBox="0 0 10 12"><path d="M3.500 1.500 H7.500 V7.500 H3.500 Z M1.500 7.500 H9.500 M5.500 8 V11.500" stroke="#222" stroke-width="1" fill="none"/><path d="M6.500 2 V7" stroke="#222" stroke-width="1"/></svg><svg class="a" style="left:987px;top:86px" width="11" height="11" viewBox="0 0 11 11"><path d="M1.500 1.500 L9.500 9.500 M9.500 1.500 L1.500 9.500" stroke="#222" stroke-width="1.400"/></svg>
<div class="a" style="left:764px;top:101px;width:240px;height:205px;background:#f0f0f0"></div>
<div class="btn" style="left:764px;top:101px;width:88px;height:24px;line-height:23px;border-color:#555">Setup...</div>
<div class="btn" style="left:857px;top:101px;width:146px;height:24px;line-height:23px;border-color:#555">Aktualisieren</div>
<svg class="a" style="left:764px;top:127px" width="240" height="178" viewBox="0 0 240 178"><rect x="0.5" y="0.5" width="239" height="177" fill="#fff" stroke="#333"/><path d="M52.6 5 V153 M74.9 5 V153 M97.2 5 V153 M119.5 5 V153 M141.8 5 V153 M164.1 5 V153 M186.4 5 V153 M208.7 5 V153 M231.0 5 V153 M30.3 131.9 H231.0 M30.3 110.7 H231.0 M30.3 89.6 H231.0 M30.3 68.4 H231.0 M30.3 47.3 H231.0 M30.3 26.1 H231.0 " stroke="#555" stroke-width="1" stroke-dasharray="1 4" fill="none"/><rect x="30.3" y="5" width="200.7" height="148" fill="none" stroke="#000" stroke-width="1"/><path d="M30.3 153 v3 M34.8 153 v1.5 M39.2 153 v1.5 M43.7 153 v1.5 M48.1 153 v1.5 M52.6 153 v3 M57.1 153 v1.5 M61.5 153 v1.5 M66.0 153 v1.5 M70.4 153 v1.5 M74.9 153 v3 M79.4 153 v1.5 M83.8 153 v1.5 M88.3 153 v1.5 M92.7 153 v1.5 M97.2 153 v3 M101.7 153 v1.5 M106.1 153 v1.5 M110.6 153 v1.5 M115.0 153 v1.5 M119.5 153 v3 M124.0 153 v1.5 M128.4 153 v1.5 M132.9 153 v1.5 M137.3 153 v1.5 M141.8 153 v3 M146.3 153 v1.5 M150.7 153 v1.5 M155.2 153 v1.5 M159.6 153 v1.5 M164.1 153 v3 M168.6 153 v1.5 M173.0 153 v1.5 M177.5 153 v1.5 M181.9 153 v1.5 M186.4 153 v3 M190.9 153 v1.5 M195.3 153 v1.5 M199.8 153 v1.5 M204.2 153 v1.5 M208.7 153 v3 M213.2 153 v1.5 M217.6 153 v1.5 M222.1 153 v1.5 M226.5 153 v1.5 M231.0 153 v3 M30.3 153.0 h-3 M30.3 148.8 h-1.5 M30.3 144.5 h-1.5 M30.3 140.3 h-1.5 M30.3 136.1 h-1.5 M30.3 131.9 h-3 M30.3 127.6 h-1.5 M30.3 123.4 h-1.5 M30.3 119.2 h-1.5 M30.3 114.9 h-1.5 M30.3 110.7 h-3 M30.3 106.5 h-1.5 M30.3 102.3 h-1.5 M30.3 98.0 h-1.5 M30.3 93.8 h-1.5 M30.3 89.6 h-3 M30.3 85.3 h-1.5 M30.3 81.1 h-1.5 M30.3 76.9 h-1.5 M30.3 72.7 h-1.5 M30.3 68.4 h-3 M30.3 64.2 h-1.5 M30.3 60.0 h-1.5 M30.3 55.7 h-1.5 M30.3 51.5 h-1.5 M30.3 47.3 h-3 M30.3 43.1 h-1.5 M30.3 38.8 h-1.5 M30.3 34.6 h-1.5 M30.3 30.4 h-1.5 M30.3 26.1 h-3 M30.3 21.9 h-1.5 M30.3 17.7 h-1.5 M30.3 13.5 h-1.5 M30.3 9.2 h-1.5 M30.3 5.0 h-3 " stroke="#000" stroke-width="0.8" fill="none"/><path d="M45.4 150.4 L48.0 145.3 L51.8 141.5 L55.6 135.0 L57.3 126.0 L59.4 101.0 L62.0 63.0 L63.2 33.5 L64.5 63.0 L67.0 102.3 L68.0 91.0 L69.5 89.6 L72.0 87.0 L74.0 75.7 L75.8 96.0 L78.4 126.3 L81.0 139.0 L83.4 136.4 L86.0 128.3 L88.5 141.5 L91.0 147.8 L94.8 149.9 L107.5 149.3 L110.0 152.0 L117.6 152.0 L122.7 149.3 L129.0 147.8 L132.8 141.5 L136.6 135.0 L139.0 136.4 L143.0 142.8 L150.5 144.0 L154.3 147.3 L159.4 146.6 L165.7 151.6 L172.0 149.9 L178.4 152.0 L188.5 152.0 L192.3 149.9 L197.4 152.1" stroke="#000" stroke-width="2.2" fill="none" stroke-linejoin="round"/><text x="30.3" y="162.5" font-size="5.5" font-family="Liberation Sans,sans-serif" font-weight="bold" text-anchor="middle">22</text><text x="52.6" y="162.5" font-size="5.5" font-family="Liberation Sans,sans-serif" font-weight="bold" text-anchor="middle">23</text><text x="74.9" y="162.5" font-size="5.5" font-family="Liberation Sans,sans-serif" font-weight="bold" text-anchor="middle">24</text><text x="97.2" y="162.5" font-size="5.5" font-family="Liberation Sans,sans-serif" font-weight="bold" text-anchor="middle">25</text><text x="119.5" y="162.5" font-size="5.5" font-family="Liberation Sans,sans-serif" font-weight="bold" text-anchor="middle">26</text><text x="141.8" y="162.5" font-size="5.5" font-family="Liberation Sans,sans-serif" font-weight="bold" text-anchor="middle">27</text><text x="164.1" y="162.5" font-size="5.5" font-family="Liberation Sans,sans-serif" font-weight="bold" text-anchor="middle">28</text><text x="186.4" y="162.5" font-size="5.5" font-family="Liberation Sans,sans-serif" font-weight="bold" text-anchor="middle">29</text><text x="208.7" y="162.5" font-size="5.5" font-family="Liberation Sans,sans-serif" font-weight="bold" text-anchor="middle">30</text><text x="231.0" y="162.5" font-size="5.5" font-family="Liberation Sans,sans-serif" font-weight="bold" text-anchor="middle">31</text><text x="22.3" y="155.0" font-size="5.5" font-family="Liberation Sans,sans-serif" font-weight="bold" text-anchor="end">0</text><text x="22.3" y="133.9" font-size="5.5" font-family="Liberation Sans,sans-serif" font-weight="bold" text-anchor="end">100</text><text x="22.3" y="112.7" font-size="5.5" font-family="Liberation Sans,sans-serif" font-weight="bold" text-anchor="end">200</text><text x="22.3" y="91.6" font-size="5.5" font-family="Liberation Sans,sans-serif" font-weight="bold" text-anchor="end">300</text><text x="22.3" y="70.4" font-size="5.5" font-family="Liberation Sans,sans-serif" font-weight="bold" text-anchor="end">400</text><text x="22.3" y="49.3" font-size="5.5" font-family="Liberation Sans,sans-serif" font-weight="bold" text-anchor="end">500</text><text x="22.3" y="28.1" font-size="5.5" font-family="Liberation Sans,sans-serif" font-weight="bold" text-anchor="end">600</text><text x="22.3" y="7.0" font-size="5.5" font-family="Liberation Sans,sans-serif" font-weight="bold" text-anchor="end">700</text><text x="130.6" y="172.5" font-size="5.5" font-family="Liberation Sans,sans-serif" font-weight="bold" text-anchor="middle">Temperatur</text><text transform="translate(10 81.0) rotate(-90)" font-size="6" font-family="Liberation Sans,sans-serif" font-weight="bold" text-anchor="middle">Vorkommen im Bild (Pixel)</text></svg>
<div class="a" style="left:764px;top:305px;width:240px;height:21px;background:linear-gradient(180deg,#e2e2e2,#e9e9e9)"></div>
<svg class="a" style="left:766px;top:307px" width="16" height="16" viewBox="0 0 16 16"><rect x="0.5" y="0.5" width="15" height="15" fill="#1c7a2a" stroke="#0a3a10"/><path d="M1 9 L3 6 L5 8 L7 5 L9 8 L11 5 L13 7 L15 5 V15 H1Z" fill="#58c848"/><path d="M1 11 L4 9 L7 11 L10 9 L15 11 V15 H1Z" fill="#2a8a30"/></svg>
<div class="tx seg" style="left:786px;top:307px;font-size:12.500px;line-height:16px;color:#7a7f88;letter-spacing:-0.4px">Visual</div>
<div class="a" style="left:824px;top:304px;width:84px;height:22px;background:#fafbfc;border:1px solid #7a828e;border-top:none;border-radius:0 0 4px 4px"></div>
<svg class="a" style="left:826px;top:306px" width="16" height="16" viewBox="0 0 16 16"><rect x="0.5" y="0.5" width="15" height="15" fill="#fff" stroke="#111"/><path d="M2 13 H14 V12 L11 11 L9.500 9 L8.500 4 H7.500 L6.500 9 L5 11 L2 12Z" fill="#111"/></svg>
<div class="tx seg" style="left:844px;top:307px;font-size:12.500px;line-height:16px;color:#111;letter-spacing:-0.1px">Histogram</div>
<div class="ptitle seg" style="left:764px;top:331px;width:240px;height:18px">Messtabelle</div>
<svg class="a" style="left:971px;top:334px" width="10" height="12" viewBox="0 0 10 12"><path d="M3.500 1.500 H7.500 V7.500 H3.500 Z M1.500 7.500 H9.500 M5.500 8 V11.500" stroke="#222" stroke-width="1" fill="none"/><path d="M6.500 2 V7" stroke="#222" stroke-width="1"/></svg><svg class="a" style="left:987px;top:334px" width="11" height="11" viewBox="0 0 11 11"><path d="M1.500 1.500 L9.500 9.500 M9.500 1.500 L1.500 9.500" stroke="#222" stroke-width="1.400"/></svg>
<div class="a" style="left:764px;top:349px;width:240px;height:204px;background:#ababab;border:1px solid #333"></div>
<div class="a" style="left:765px;top:350px;width:238px;height:18px;background:linear-gradient(180deg,#fff 0,#fff 50%,#f0f1f3 100%);border-bottom:1px solid #d5d5d5"></div>
<div class="a" style="left:809px;top:350px;width:1px;height:17px;background:#e2e3ea"></div><div class="a" style="left:912px;top:350px;width:1px;height:17px;background:#e2e3ea"></div>
<div class="tx" style="left:774px;top:353px;font-size:11.500px;letter-spacing:-0.420px;line-height:14px">Typ</div><div class="tx" style="left:817px;top:353px;font-size:11.500px;letter-spacing:-0.420px;line-height:14px">Text</div><div class="tx" style="left:920px;top:353px;font-size:11.500px;letter-spacing:-0.420px;line-height:14px">Data</div>
<div class="a" style="left:764px;top:553px;width:240px;height:21px;background:linear-gradient(180deg,#e2e2e2,#e9e9e9)"></div>
<svg class="a" style="left:766px;top:555px" width="16" height="16" viewBox="0 0 16 16"><rect x="0.5" y="0.5" width="15" height="15" fill="#2a7a78" stroke="#0a3a3a"/><rect x="1" y="1" width="14" height="3" fill="#1a5a5a"/><path d="M2 6 H7 M9 6 H14 M2 9 H7 M9 9 H14 M2 12 H7 M9 12 H14" stroke="#c8f0e8" stroke-width="1.600"/></svg>
<div class="tx seg" style="left:785px;top:555px;font-size:12.500px;line-height:16px;color:#7a7f88;letter-spacing:-0.350px">Messeinstellungen</div>
<div class="a" style="left:890px;top:552px;width:91px;height:22px;background:#fafbfc;border:1px solid #7a828e;border-top:none;border-radius:0 0 4px 4px"></div>
<svg class="a" style="left:893px;top:555px" width="16" height="16" viewBox="0 0 16 16"><rect x="0.5" y="0.5" width="15" height="15" fill="#fff" stroke="#444"/><rect x="1" y="1" width="14" height="3" fill="#c8c8c8"/><path d="M1 6.500 H15 M1 9.500 H15 M1 12.500 H15 M4.500 4 V15 M8.500 4 V15 M11.500 4 V15" stroke="#888" stroke-width="0.800" stroke-dasharray="1 1"/></svg>
<div class="tx seg" style="left:911px;top:555px;font-size:12.500px;line-height:16px;color:#111;letter-spacing:-0.300px">Messtabelle</div>
<div class="red" style="left:761px;top:75px;width:247px;height:236px"></div>
</div>
<div id="B" class="a" style="left:0;top:0">
<div class="ptitle seg" style="left:32px;top:577px;width:972px;height:19px;background:linear-gradient(180deg,#dfe8f3 0,#a9c3e2 2px,#98b5d8 100%);color:#101a3c;font-size:13px;line-height:18px">Linien</div>
<svg class="a" style="left:971px;top:581px" width="10" height="12" viewBox="0 0 10 12"><path d="M3.500 1.500 H7.500 V7.500 H3.500 Z M1.500 7.500 H9.500 M5.500 8 V11.500" stroke="#222" stroke-width="1" fill="none"/><path d="M6.500 2 V7" stroke="#222" stroke-width="1"/></svg><svg class="a" style="left:987px;top:582px" width="11" height="11" viewBox="0 0 11 11"><path d="M1.500 1.500 L9.500 9.500 M9.500 1.500 L1.500 9.500" stroke="#222" stroke-width="1.400"/></svg>
<div class="a" style="left:31px;top:596px;width:973px;height:120px;background:#fff;border:1px solid #333"></div>
<svg class="a" style="left:32px;top:597px" width="971" height="118" viewBox="32 597 971 118"><rect x="80" y="606" width="905" height="67" fill="#000"/><path d="M105.1 612 V667 M130.2 612 V667 M155.3 612 V667 M180.4 612 V667 M205.6 612 V667 M230.7 612 V667 M255.8 612 V667 M280.9 612 V667 M306.0 612 V667 M331.1 612 V667 M356.2 612 V667 M381.3 612 V667 M406.4 612 V667 M431.6 612 V667 M456.7 612 V667 M481.8 612 V667 M506.9 612 V667 M532.0 612 V667 M557.1 612 V667 M582.2 612 V667 M607.3 612 V667 M632.4 612 V667 M657.6 612 V667 M682.7 612 V667 M707.8 612 V667 M732.9 612 V667 M758.0 612 V667 M783.1 612 V667 M808.2 612 V667 M833.3 612 V667 M858.4 612 V667 M883.6 612 V667 M908.7 612 V667 M933.8 612 V667 M958.9 612 V667 " stroke="#888" stroke-width="1" stroke-dasharray="1 10" fill="none" opacity="0.55"/><path d="M230.7 612 V671 M381.3 612 V671 M532.0 612 V671 M682.7 612 V671 M833.3 612 V671 " stroke="#aaa" stroke-width="1" stroke-dasharray="1 2" fill="none" opacity="0.55"/><path d="M86 661.5 H976 M86 650.5 H976 M86 639.5 H976 M86 628.5 H976 M86 617.5 H976 " stroke="#999" stroke-width="1" stroke-dasharray="1 3" fill="none" opacity="0.55"/><path d="M80.0 673 v5 M117.7 673 v3 M155.3 673 v3 M193.0 673 v3 M230.7 673 v5 M268.3 673 v3 M306.0 673 v3 M343.7 673 v3 M381.3 673 v5 M419.0 673 v3 M456.7 673 v3 M494.3 673 v3 M532.0 673 v5 M569.7 673 v3 M607.3 673 v3 M645.0 673 v3 M682.7 673 v5 M720.3 673 v3 M758.0 673 v3 M795.7 673 v3 M833.3 673 v5 M871.0 673 v3 M908.7 673 v3 M946.3 673 v3 M984.0 673 v5 M80 672.5 h-5 M80 669.8 h-3 M80 667.0 h-3 M80 664.2 h-3 M80 661.5 h-3 M80 658.8 h-3 M80 656.0 h-3 M80 653.2 h-3 M80 650.5 h-5 M80 647.8 h-3 M80 645.0 h-3 M80 642.2 h-3 M80 639.5 h-3 M80 636.8 h-3 M80 634.0 h-3 M80 631.2 h-3 M80 628.5 h-5 M80 625.8 h-3 M80 623.0 h-3 M80 620.2 h-3 M80 617.5 h-3 M80 614.8 h-3 M80 612.0 h-3 M80 609.2 h-3 M80 606.5 h-5 " stroke="#000" stroke-width="1" fill="none"/><text x="80.0" y="691.5" font-size="10.5" font-family="Liberation Sans,sans-serif" text-anchor="middle" letter-spacing="0.3">0.0</text><text x="230.7" y="691.5" font-size="10.5" font-family="Liberation Sans,sans-serif" text-anchor="middle" letter-spacing="0.3">0.2</text><text x="381.3" y="691.5" font-size="10.5" font-family="Liberation Sans,sans-serif" text-anchor="middle" letter-spacing="0.3">0.4</text><text x="532.0" y="691.5" font-size="10.5" font-family="Liberation Sans,sans-serif" text-anchor="middle" letter-spacing="0.3">0.6</text><text x="682.7" y="691.5" font-size="10.5" font-family="Liberation Sans,sans-serif" text-anchor="middle" letter-spacing="0.3">0.8</text><text x="833.3" y="691.5" font-size="10.5" font-family="Liberation Sans,sans-serif" text-anchor="middle" letter-spacing="0.3">1.0</text><text x="984.0" y="691.5" font-size="10.5" font-family="Liberation Sans,sans-serif" text-anchor="middle" letter-spacing="0.3">1.2</text><text x="70.5" y="676.0" font-size="10.5" font-family="Liberation Sans,sans-serif" text-anchor="end" letter-spacing="0.3">0.0</text><text x="70.5" y="654.0" font-size="10.5" font-family="Liberation Sans,sans-serif" text-anchor="end" letter-spacing="0.3">0.4</text><text x="70.5" y="632.0" font-size="10.5" font-family="Liberation Sans,sans-serif" text-anchor="end" letter-spacing="0.3">0.8</text><text x="70.5" y="610.0" font-size="10.5" font-family="Liberation Sans,sans-serif" text-anchor="end" letter-spacing="0.3">1.2</text><text x="532.5" y="704" font-size="10.5" font-weight="bold" font-family="Liberation Sans,sans-serif" text-anchor="middle" letter-spacing="0.1">Messpunkt</text><text transform="translate(51 640) rotate(-90)" font-size="10" font-weight="bold" font-family="Liberation Sans,sans-serif" text-anchor="middle" letter-spacing="0.1">Temperatur</text></svg>
<div class="a" style="left:31px;top:716px;width:973px;height:21px;background:#e4e4e4"></div>
<div class="a" style="left:31px;top:715px;width:61px;height:22px;background:#fafbfc;border:1px solid #7a828e;border-top:none;border-radius:0 0 4px 4px"></div>
<svg class="a" style="left:33px;top:718px" width="16" height="16" viewBox="0 0 16 16"><rect width="16" height="16" fill="#000"/><path d="M1 7 L4 3 L7 6 L10 4 L12 7 L15 8" stroke="#30d060" stroke-width="1.500" fill="none"/><path d="M1 11 L4 8 L6 11 L9 13 L12 10 L15 13" stroke="#e03030" stroke-width="1.500" fill="none"/></svg>
<div class="tx seg" style="left:52px;top:718px;font-size:12.500px;line-height:16px;color:#111;letter-spacing:-0.100px">Linien</div>
<svg class="a" style="left:93px;top:718px" width="16" height="16" viewBox="0 0 16 16"><rect x="0.5" y="0.5" width="15" height="15" fill="#fff" stroke="#111"/><path d="M2 13 L5 7 L8 4 L11 3 L14 3" stroke="#30c040" stroke-width="1.300" fill="none"/><path d="M2 14 L6 11 L9 8 L14 6" stroke="#d03020" stroke-width="1.300" fill="none"/></svg>
<div class="tx seg" style="left:112px;top:718px;font-size:12.500px;line-height:16px;color:#7a7f88;letter-spacing:-0.100px">Plotter</div>
<div class="a" style="left:154px;top:719px;width:1px;height:15px;background:#8a8f98"></div>
<div class="a" style="left:8px;top:736px;width:995px;height:24px;background:linear-gradient(180deg,#f4f4f4 0,#f4f4f4 1px,#dedede 1px,#dcdcdc 100%)"></div>
<div class="a seg" style="left:10px;top:741px;width:44px;height:17px;background:#3cc43c;border:1px solid #7fe07f;color:#0a4a0a;font-size:12.500px;letter-spacing:-0.200px;line-height:15px;text-align:center">Screen</div>
<div class="a" style="left:990px;top:748px;width:11px;height:11px;background:radial-gradient(circle at 1.5px 1.5px,#9a9a9a 1px,transparent 1.300px) 0 0/4px 4px;clip-path:polygon(100% 0,100% 100%,0 100%)"></div>
</div>
</body></html>
